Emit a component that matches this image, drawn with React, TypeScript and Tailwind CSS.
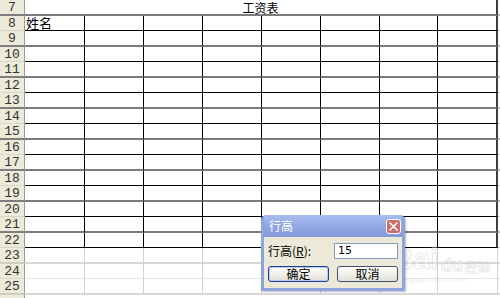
import React from 'react'

// column widths of the data area, right border included
const COLS = ['w-[60px]', 'w-[59px]', 'w-[59px]', 'w-[59px]', 'w-[59px]', 'w-[59px]', 'w-[58px]', 'w-[60px]']

const TABLE_ROWS = [8, 9, 10, 11, 12, 13, 14, 15, 16, 17, 18, 19, 20, 21, 22]
const BLANK_ROWS = [23, 24, 25]

const CJK = { fontFamily: '"Noto Sans CJK SC", "Noto Sans", sans-serif' }
const NUM = { fontFamily: '"Liberation Mono", monospace' }

function RowHead({ n, odd }: { n: number; odd: boolean }) {
  return (
    <div
      className={`w-[25px] shrink-0 bg-[#ecead9] border-r border-r-[#9c9a8c] flex items-center justify-center text-[13px] text-[#333] leading-none ${
        odd ? 'border-b-2 border-b-[#7e7e7e]' : 'border-b border-b-[#d9d6c6]'
      }`}
      style={NUM}
    >
      {n}
    </div>
  )
}

function TableRow({ n }: { n: number }) {
  const odd = n % 2 === 1
  return (
    <div className={`flex ${odd ? 'h-[16px]' : 'h-[15px]'}`}>
      <RowHead n={n} odd={odd} />
      {COLS.map((w, i) => (
        <div
          key={i}
          className={`${w} shrink-0 ${i === 7 ? 'border-r-2 border-r-[#3c3c3c]' : 'border-r border-r-black'} ${
            odd ? 'border-b-2 border-b-[#7b7b7b]' : 'border-b border-b-black'
          } text-[13px] leading-[14px] text-black pl-[1px]`}
          style={CJK}
        >
          {n === 8 && i === 0 ? '姓名' : ''}
        </div>
      ))}
      <div className={`flex-1 ${odd ? 'border-b-2 border-b-[#bdbdbd]' : 'border-b border-b-[#d0d0d0]'}`} />
    </div>
  )
}

function BlankRow({ n }: { n: number }) {
  const odd = n % 2 === 1
  return (
    <div className={`flex ${odd ? 'h-[16px]' : 'h-[15px]'}`}>
      <div
        className={`w-[25px] shrink-0 bg-[#ecead9] border-r border-r-[#9c9a8c] flex items-center justify-center text-[13px] text-[#333] leading-none ${
          odd ? 'border-b-2 border-b-[#cfcdc0]' : 'border-b border-b-[#dedbcc]'
        }`}
        style={NUM}
      >
        {n}
      </div>
      {COLS.map((w, i) => (
        <div
          key={i}
          className={`${w} shrink-0 border-r border-r-[#d2d2d2] ${
            odd ? 'border-b-2 border-b-[#d8d8d8]' : 'border-b border-b-[#e6e6e6]'
          }`}
        />
      ))}
      <div className={`flex-1 ${odd ? 'border-b-2 border-b-[#d8d8d8]' : 'border-b border-b-[#e6e6e6]'}`} />
    </div>
  )
}

function RowHeightDialog() {
  return (
    <div className="absolute left-[261px] top-[215px] w-[144px] h-[76px] rounded-t-[5px] bg-[#8fa3dd] px-[3px] pb-[3px] flex flex-col shadow-[1px_1px_2px_rgba(0,0,0,0.25)]">
      {/* title bar */}
      <div className="h-[22px] shrink-0 flex items-center justify-between pl-[5px] pr-[1px] bg-gradient-to-b from-[#aabdf0] via-[#92a8e2] to-[#8499d8]">
        <span className="text-[12px] text-white leading-none" style={CJK}>
          行高
        </span>
        <div className="w-[15px] h-[15px] rounded-[3px] border border-white bg-[#c9706f] flex items-center justify-center">
          <svg width="9" height="9" viewBox="0 0 9 9">
            <path d="M1 1 L8 8 M8 1 L1 8" stroke="white" strokeWidth="1.6" strokeLinecap="round" />
          </svg>
        </div>
      </div>
      {/* body */}
      <div className="flex-1 bg-[#ece9d8] pl-[4px] pr-[4px] pt-[6px] flex flex-col gap-[8px]">
        <div className="flex items-center justify-between h-[15px]">
          <span className="text-[12px] text-black leading-none" style={CJK}>
            行高(<span className="underline">R</span>):
          </span>
          <div className="w-[64px] h-[16px] bg-white border border-[#7f9db9] flex items-center pl-[3px] text-[11px] text-black leading-none" style={{ fontFamily: 'Tahoma, "DejaVu Sans", sans-serif' }}>
            15
          </div>
        </div>
        <div className="flex items-center justify-between">
          <button className="w-[61px] h-[16px] rounded-[3px] border border-[#1c3d8f] bg-gradient-to-b from-white to-[#e3e1d5] shadow-[inset_0_0_0_1px_#b7caf0] flex items-center justify-center text-[12px] text-black leading-none" style={CJK}>
            确定
          </button>
          <button className="w-[61px] h-[16px] rounded-[3px] border border-[#3e4d6e] bg-gradient-to-b from-white to-[#e3e1d5] flex items-center justify-center text-[12px] text-black leading-none" style={CJK}>
            取消
          </button>
        </div>
      </div>
    </div>
  )
}

function Watermark() {
  return (
    <div className="absolute left-[392px] top-[244px] pointer-events-none select-none opacity-40">
      <div className="flex items-end gap-[2px]">
        <span className="text-[30px] leading-none font-bold text-white [-webkit-text-stroke:1px_#c4c4c4]" style={{ fontFamily: '"Liberation Sans", sans-serif' }}>
          Bai
        </span>
        <span className="text-[18px] leading-none font-bold text-white [-webkit-text-stroke:1px_#c4c4c4]" style={{ fontFamily: '"Liberation Sans", sans-serif' }}>
          du
        </span>
        <span className="text-[13px] leading-none text-white [-webkit-text-stroke:0.6px_#c4c4c4] mb-[2px]" style={CJK}>
          经验
        </span>
      </div>
      <div className="text-[8px] leading-none text-[#cfcfcf] mt-[2px] ml-[10px]" style={{ fontFamily: '"Liberation Sans", sans-serif' }}>
        jingyan.baidu.com
      </div>
    </div>
  )
}

export default function App() {
  return (
    <div className="relative w-[500px] h-[298px] overflow-hidden bg-white">
      {/* row 7: merged title */}
      <div className="flex h-[16px]">
        <RowHead n={7} odd />
        <div className="w-[473px] shrink-0 border-r-2 border-r-[#3c3c3c] border-b-2 border-b-[#7b7b7b] flex justify-center items-center text-[12px] leading-[13px] text-black" style={CJK}>
          工资表
        </div>
        <div className="flex-1 border-b-2 border-b-[#bdbdbd]" />
      </div>
      {TABLE_ROWS.map(n => (
        <TableRow key={n} n={n} />
      ))}
      {BLANK_ROWS.map(n => (
        <BlankRow key={n} n={n} />
      ))}
      <div className="flex h-[4px]">
        <div className="w-[25px] bg-[#ecead9] border-r border-r-[#9c9a8c]" />
      </div>
      <Watermark />
      <RowHeightDialog />
    </div>
  )
}
